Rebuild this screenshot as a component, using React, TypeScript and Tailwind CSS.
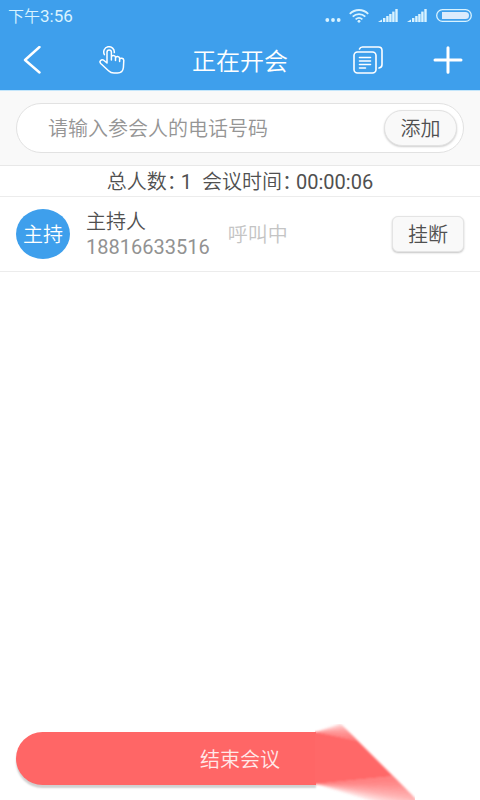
import React from "react";

interface Participant {
  id: number;
  badge: string;
  name: string;
  phone: string;
  status: string;
}

const participants: Participant[] = [
  {
    id: 1,
    badge: "主持",
    name: "主持人",
    phone: "18816633516",
    status: "呼叫中",
  },
];

const WifiIcon = () => (
  <svg width="20" height="14" viewBox="0 0 20 14" fill="none" stroke="#d9f3ff">
    <path d="M0.8 4.8C6 -0.3 14 -0.3 19.2 4.8" strokeWidth="1.8" />
    <path d="M3.7 7.7C7.3 4.3 12.7 4.3 16.3 7.7" strokeWidth="1.8" />
    <path d="M6.6 10.4C8.6 8.6 11.4 8.6 13.4 10.4" strokeWidth="1.7" />
    <circle cx="10" cy="12.3" r="1.4" fill="#d9f3ff" stroke="none" />
  </svg>
);

const SignalIcon = () => (
  <svg width="20" height="13" viewBox="0 0 20 13" fill="#d9f3ff">
    <path d="M0 13L4 10.6V13Z" />
    <rect x="5" y="9" width="2.4" height="4" />
    <rect x="8.2" y="7" width="2.4" height="6" />
    <rect x="11.2" y="5" width="2.4" height="8" />
    <rect x="14.2" y="2.6" width="2.4" height="10.4" />
    <rect x="17.3" y="0" width="2.4" height="13" />
  </svg>
);

const BatteryIcon = () => (
  <svg width="36" height="13" viewBox="0 0 36 13" fill="none">
    <rect x="0.7" y="0.7" width="34.6" height="11.6" rx="5.8" stroke="#d9f3ff" strokeWidth="1.3" />
    <path d="M6 3H29.5A3.5 3.5 0 0 1 29.5 10H6Z" fill="#dcebfc" />
  </svg>
);

const BackIcon = () => (
  <svg width="18" height="28" viewBox="0 0 18 28" fill="none" stroke="white" strokeWidth="2.4" strokeLinecap="round" strokeLinejoin="round">
    <path d="M16.5 1L2 14L16.5 26.5" />
  </svg>
);

const TapIcon = () => (
  <svg width="26" height="28" viewBox="0 0 26 28" fill="none" stroke="white" strokeWidth="1.5" strokeLinecap="round" strokeLinejoin="round">
    <path d="M5.4 8.6A5.3 5.3 0 1 1 15.3 6.6" />
    <path d="M8 17V6.3A2.2 2.2 0 0 1 12.4 6.3V14V10.5C12.8 9 16.2 9 16.5 11V14.5V11.5C17 10 20.2 10.2 20.6 12V15.5V13C21.4 11.8 24.6 12 24.8 14.2L24.4 21.5C24 25.2 21.5 27 18.5 27H15C12.5 27 11 26.2 9.5 24.7L1.7 17.5C-0.3 15.2 2.5 12.8 4.7 14.2L8 17" />
  </svg>
);

const DocsIcon = () => (
  <svg width="30" height="28" viewBox="0 0 30 28" fill="none" stroke="white" strokeWidth="1.6" strokeLinecap="round" strokeLinejoin="round">
    <rect x="1" y="6" width="22" height="21" rx="3.5" />
    <path d="M6.5 3C7 1.5 8 1 9.5 1H25.5Q29 1 29 4.5V18.5Q29 21.5 26 22" />
    <path d="M6.5 11.5H17.5M6.5 15H17.5M6.5 18.5H17.5M6.5 22H12.5" />
  </svg>
);

const PlusIcon = () => (
  <svg width="30" height="28" viewBox="0 0 30 28" fill="none" stroke="white" strokeWidth="3" strokeLinecap="round">
    <path d="M15 1.7V26.3M2 14H28" />
  </svg>
);

// slanted tail of the end-meeting button, its edges fade out in a fan
const topFan = [-1, 1, 3, 5, 7, 9, 11, 13];
const bottomFan = [56, 59, 62, 65, 68, 72, 76, 80, 85, 90];

const ButtonTail = () => (
  <svg width="100" height="76" viewBox="0 0 100 76" className="block">
    <defs>
      <filter id="soft" filterUnits="userSpaceOnUse" x="-10" y="-10" width="120" height="110">
        <feGaussianBlur stdDeviation="1" />
      </filter>
      <clipPath id="slant">
        <path d="M-10 -10H16L110 84V110H-10Z" />
      </clipPath>
    </defs>
    <g filter="url(#soft)">
      <g clipPath="url(#slant)" fill="#ff6868">
        <path d="M-10 8H0L44 17L100 50L0 60H-10Z" />
        {topFan.map((y) => (
          <path key={y} d={`M0 8L26 ${y}L50 ${y}L44 17Z`} opacity="0.2" />
        ))}
        {bottomFan.map((y) => (
          <path key={y} d={`M0 60L100 50L110 50L100 ${y}Z`} opacity="0.17" />
        ))}
      </g>
    </g>
  </svg>
);

const StatusBar = () => (
  <div className="flex h-8 items-center justify-between pl-2 pr-2 text-[#d9f3ff]">
    <span className="text-base leading-8">
      下午<span className="text-[17px] font-normal">3:56</span>
    </span>
    <div className="flex items-center gap-2">
      <svg width="16" height="14" viewBox="0 0 16 14" fill="#d9f3ff">
        <circle cx="2.3" cy="11" r="1.9" />
        <circle cx="8" cy="11" r="1.9" />
        <circle cx="13.7" cy="11" r="1.9" />
      </svg>
      <div className="flex items-center gap-[9px] pb-px">
        <WifiIcon />
        <SignalIcon />
        <SignalIcon />
        <BatteryIcon />
      </div>
    </div>
  </div>
);

const ParticipantRow = ({ item }: { item: Participant }) => (
  <li className="flex h-[75px] items-center border-b border-[#ececec] px-4">
    <div className="flex h-[50px] w-[54px] items-center justify-center rounded-[50%] bg-[#3e9fec] pt-0.5 text-xl text-white">
      {item.badge}
    </div>
    <div className="ml-4 pt-0.5 text-xl leading-[25px]">
      <p className="text-[#505050]">{item.name}</p>
      <p className="font-normal text-[#929292]">{item.phone}</p>
    </div>
    <span className="ml-[18px] pt-0.5 text-xl text-[#c4c4c4]">{item.status}</span>
    <button
      type="button"
      className="ml-auto h-9 w-[72px] rounded-md border border-[#e4e4e4] bg-[#f9f9f9] pt-0.5 text-xl leading-8 text-[#505050] shadow-[0_1px_2px_#c4c4c4]"
    >
      挂断
    </button>
  </li>
);

const App = () => {
  return (
    <div className="flex min-h-screen flex-col overflow-hidden bg-white font-['Roboto','Noto_Sans_CJK_SC',sans-serif] font-[350]">
      <header className="h-[90px] bg-[#3e9fec] text-white">
        <StatusBar />
        <nav className="grid h-14 grid-cols-[64px_96px_1fr_96px_64px] items-center">
          <button type="button" aria-label="返回" className="flex justify-center">
            <BackIcon />
          </button>
          <button type="button" aria-label="举手" className="flex justify-center">
            <TapIcon />
          </button>
          <h1 className="pt-1 text-center text-2xl font-[350]">正在开会</h1>
          <button type="button" aria-label="记录" className="flex justify-center">
            <DocsIcon />
          </button>
          <button type="button" aria-label="添加成员" className="flex justify-center">
            <PlusIcon />
          </button>
        </nav>
      </header>

      <form className="border-t border-b border-t-[#c4e6fb] border-b-[#e8e8e8] bg-[#f9f9f9] px-4 py-3">
        <div className="flex h-[50px] items-center rounded-full border border-[#e2e2e2] bg-white pl-[31px] pr-1.5">
          <input
            type="tel"
            aria-label="参会人的电话号码"
            placeholder="请输入参会人的电话号码"
            className="min-w-0 flex-1 bg-transparent pt-0.5 text-xl text-[#505050] outline-none placeholder:text-[#959595]"
          />
          <button
            type="button"
            className="h-9 w-[73px] rounded-full border border-[#e2e2e2] bg-[#f9f9f9] pt-0.5 text-xl leading-8 text-[#505050] shadow-[0_1px_2px_#cfcfcf]"
          >
            添加
          </button>
        </div>
      </form>

      <div className="flex h-[31px] items-center justify-center gap-2.5 border-b border-[#ececec] pt-px text-xl leading-7 text-[#505050]">
        <p className="flex gap-1">
          <span className="[font-feature-settings:'halt']">总人数：</span>
          <span className="font-normal">{participants.length}</span>
        </p>
        <p className="flex gap-1">
          <span className="[font-feature-settings:'halt']">会议时间：</span>
          <time className="font-normal">00:00:06</time>
        </p>
      </div>

      <ul>
        {participants.map((item) => (
          <ParticipantRow key={item.id} item={item} />
        ))}
      </ul>

      <footer className="mt-auto px-4 pb-[15px]">
        <button type="button" className="relative block h-[53px] w-full pt-0.5 text-xl text-[#ffe9e9]">
          <span className="absolute inset-y-0 left-0 right-[148px] rounded-l-full bg-[#ff6666] shadow-[0_3px_2px_#d0d0d0]" />
          <span className="absolute -top-2 right-[49px]">
            <ButtonTail />
          </span>
          <span className="relative">结束会议</span>
        </button>
      </footer>
    </div>
  );
};

export default App;
